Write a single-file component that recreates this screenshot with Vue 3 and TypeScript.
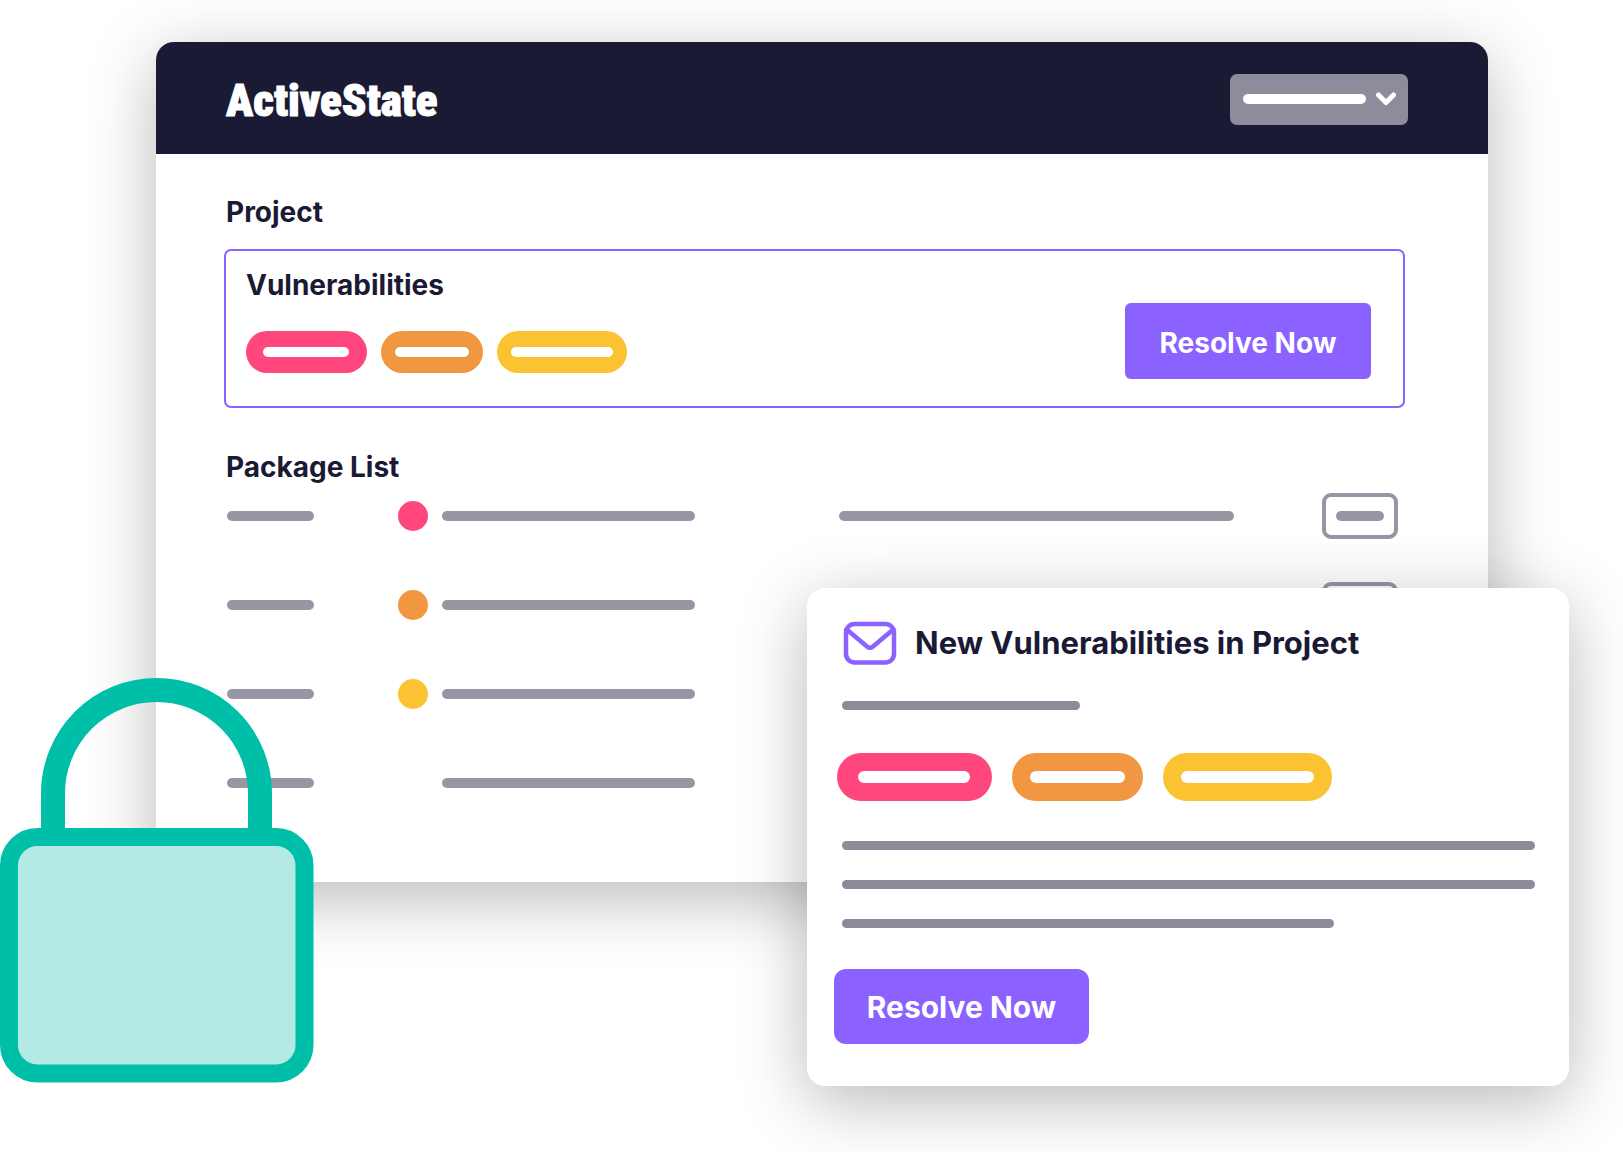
<script setup lang="ts">
interface Pill {
  tone: string
  label: string
  bar: number
}

interface PackageRow {
  id: number
  tone: string | null
}

const projectPills: Pill[] = [
  { tone: 'critical', label: 'Critical', bar: 86 },
  { tone: 'high', label: 'High', bar: 74 },
  { tone: 'medium', label: 'Medium', bar: 102 },
]

const alertPills: Pill[] = [
  { tone: 'critical', label: 'Critical', bar: 112 },
  { tone: 'high', label: 'High', bar: 95 },
  { tone: 'medium', label: 'Medium', bar: 133 },
]

const packages: PackageRow[] = [
  { id: 1, tone: 'critical' },
  { id: 2, tone: 'high' },
  { id: 3, tone: 'medium' },
  { id: 4, tone: null },
]
</script>

<template>
  <div class="stage">
    <main class="window">
      <header class="topbar">
        <a class="brand" href="#">ActiveState</a>
        <div class="picker">
          <span class="picker-bar"></span>
          <svg class="chevron" viewBox="0 0 20 14" aria-hidden="true">
            <path d="M2.5 3 L10 10.5 L17.5 3" />
          </svg>
          <select class="picker-select" aria-label="Account">
            <option></option>
          </select>
        </div>
      </header>

      <div class="content">
        <h2 class="heading section-heading">Project</h2>
        <section class="summary">
          <div class="summary-info">
            <h3 class="heading">Vulnerabilities</h3>
            <div class="pills">
              <span
                v-for="p in projectPills"
                :key="p.tone"
                class="pill"
                :class="p.tone"
                role="img"
                :aria-label="p.label"
              >
                <i class="pill-bar" :style="{ width: p.bar + 'px' }"></i>
              </span>
            </div>
          </div>
          <button class="resolve" type="button">Resolve Now</button>
        </section>

        <h2 class="heading section-heading list-heading">Package List</h2>
        <ul class="packages">
          <li v-for="row in packages" :key="row.id" class="package">
            <span class="line line-name"></span>
            <span class="dot" :class="row.tone ?? 'none'"></span>
            <span class="line line-title"></span>
            <span class="line line-detail"></span>
            <button class="action" type="button" aria-label="Package action">
              <span class="line"></span>
            </button>
          </li>
        </ul>
      </div>
    </main>

    <aside class="alert">
      <div class="alert-head">
        <svg class="mail" viewBox="0 0 54 44" aria-hidden="true">
          <rect x="3" y="3" width="48" height="38.5" rx="8.5" />
          <path d="M2 7 L24 25.5 Q27 28 30 25.5 L52 7" />
        </svg>
        <h2 class="alert-title">New Vulnerabilities in Project</h2>
      </div>
      <span class="line intro"></span>
      <div class="pills pills-large">
        <span
          v-for="p in alertPills"
          :key="p.tone"
          class="pill"
          :class="p.tone"
          role="img"
          :aria-label="p.label"
        >
          <i class="pill-bar" :style="{ width: p.bar + 'px' }"></i>
        </span>
      </div>
      <div class="copy">
        <span class="line"></span>
        <span class="line"></span>
        <span class="line short"></span>
      </div>
      <button class="resolve resolve-large" type="button">Resolve Now</button>
    </aside>

    <svg class="lock" viewBox="0 0 314 405" aria-hidden="true">
      <path class="shackle" d="M53 160 V115.5 A103.5 103.5 0 0 1 260 115.5 V160" />
      <rect class="lock-body" x="9" y="159" width="295.5" height="236.5" rx="28.5" />
    </svg>
  </div>
</template>

<style>
body {
  background: #fff;
}
</style>

<style scoped>
.stage {
  position: relative;
  box-sizing: border-box;
  min-height: 100vh;
  padding: 42px 135px 66px 156px;
  font-family: Inter, "Open Sans", sans-serif;
  color: #1b1a35;
  overflow: hidden;
}

.stage * {
  box-sizing: border-box;
}

.window {
  background: #fff;
  border-radius: 18px 18px 0 0;
  box-shadow: 0 16px 68px rgba(0, 0, 0, 0.28);
}

.topbar {
  display: flex;
  align-items: center;
  justify-content: space-between;
  height: 112px;
  padding: 2px 80px 0 70px;
  border-radius: 18px 18px 0 0;
  background: #1b1a35;
}

.brand {
  padding-top: 4px;
  font-family: Impact, "Roboto Condensed", "Liberation Sans Narrow", "Liberation Sans", sans-serif;
  font-size: 45px;
  font-weight: 900;
  line-height: 56px;
  color: #fff;
  text-decoration: none;
  -webkit-text-stroke: 1px #fff;
}

.picker {
  position: relative;
  display: flex;
  align-items: center;
  justify-content: space-between;
  width: 178px;
  height: 51px;
  padding: 0 12px 0 13px;
  border-radius: 7px;
  background: #8e8c9a;
}

.picker-bar {
  width: 123px;
  height: 10px;
  border-radius: 5px;
  background: #fff;
}

.chevron {
  width: 20px;
  height: 14px;
  fill: none;
  stroke: #fff;
  stroke-width: 5;
  stroke-linecap: round;
  stroke-linejoin: round;
}

.picker-select {
  position: absolute;
  inset: 0;
  width: 100%;
  height: 100%;
  opacity: 0;
  cursor: pointer;
}

.content {
  padding: 40px 83px 76px 68px;
}

.heading {
  margin: 0;
  font-size: 28px;
  font-weight: 700;
  line-height: 36px;
}

.section-heading {
  padding-left: 2px;
}

.summary {
  display: flex;
  align-items: flex-end;
  justify-content: space-between;
  margin-top: 19px;
  padding: 16px 32px 27px 20px;
  border: 2px solid #8b61ff;
  border-radius: 7px;
}

.summary-info {
  padding-bottom: 6px;
}

.pills {
  display: flex;
  gap: 14px;
  margin-top: 28px;
}

.pill {
  display: flex;
  align-items: center;
  height: 42px;
  padding: 0 14px;
  border-radius: 24px;
}

.pill.critical {
  padding: 0 18px 0 17px;
}

.pill-bar {
  height: 10px;
  border-radius: 6px;
  background: #fff;
}

.critical {
  background: #ff477e;
}

.high {
  background: #f29741;
}

.medium {
  background: #fbc232;
}

.resolve {
  width: 246px;
  height: 76px;
  padding: 4px 0 0;
  border: 0;
  border-radius: 6px;
  background: #8b61ff;
  font-family: inherit;
  font-size: 28px;
  font-weight: 700;
  line-height: 36px;
  color: #fff;
  cursor: pointer;
}

.list-heading {
  margin-top: 41px;
}

.packages {
  display: flex;
  flex-direction: column;
  gap: 43px;
  margin: 8px 0 0;
  padding: 0 7px 0 3px;
  list-style: none;
}

.package {
  display: grid;
  grid-template-columns: minmax(0, 171fr) 44px minmax(0, 397fr) minmax(0, 483fr) 76px;
  align-items: center;
  height: 46px;
}

.line {
  display: block;
  max-width: 100%;
  height: 10px;
  border-radius: 5px;
  background: #9896a3;
}

.line-name {
  width: 87px;
}

.line-title {
  width: 253px;
}

.line-detail {
  width: 395px;
}

.dot {
  width: 30px;
  height: 30px;
  border-radius: 50%;
}

.action {
  width: 76px;
  height: 46px;
  padding: 0 10px;
  border: 4px solid #9896a3;
  border-radius: 9px;
  background: transparent;
  cursor: pointer;
}

.alert {
  position: absolute;
  top: 588px;
  right: 54px;
  left: 807px;
  padding: 33px 34px 42px 27px;
  border-radius: 18px;
  background: #fff;
  box-shadow: 0 16px 68px rgba(0, 0, 0, 0.28);
}

.alert .line {
  height: 9px;
  background: #8d8b99;
}

.alert-head {
  display: flex;
  align-items: center;
  gap: 18px;
  height: 44px;
  padding-left: 9px;
}

.mail {
  flex: none;
  width: 54px;
  height: 44px;
  fill: none;
  stroke: #8b61ff;
  stroke-width: 4.5;
  stroke-linejoin: round;
}

.alert-title {
  margin: 0;
  font-size: 31px;
  font-weight: 700;
  line-height: 40px;
  white-space: nowrap;
}

.intro {
  width: 238px;
  margin: 36px 0 0 8px;
}

.pills-large {
  gap: 20px;
  margin: 43px 0 0 3px;
}

.pills-large .pill {
  height: 48px;
  padding: 0 18px;
}

.pills-large .pill.critical {
  padding: 0 22px 0 21px;
}

.pills-large .pill-bar {
  height: 12px;
}

.copy {
  display: flex;
  flex-direction: column;
  gap: 30px;
  margin: 40px 0 0 8px;
}

.copy .short {
  width: 71%;
}

.resolve-large {
  display: block;
  width: 255px;
  height: 75px;
  margin-top: 41px;
  padding: 0;
  border-radius: 12px;
  font-size: 30px;
}

.lock {
  position: absolute;
  top: 678px;
  left: 0;
  width: 314px;
  height: 405px;
}

.shackle {
  fill: none;
  stroke: #00bfa8;
  stroke-width: 24;
}

.lock-body {
  fill: #b3ebe4;
  stroke: #00bfa8;
  stroke-width: 18;
}
</style>
